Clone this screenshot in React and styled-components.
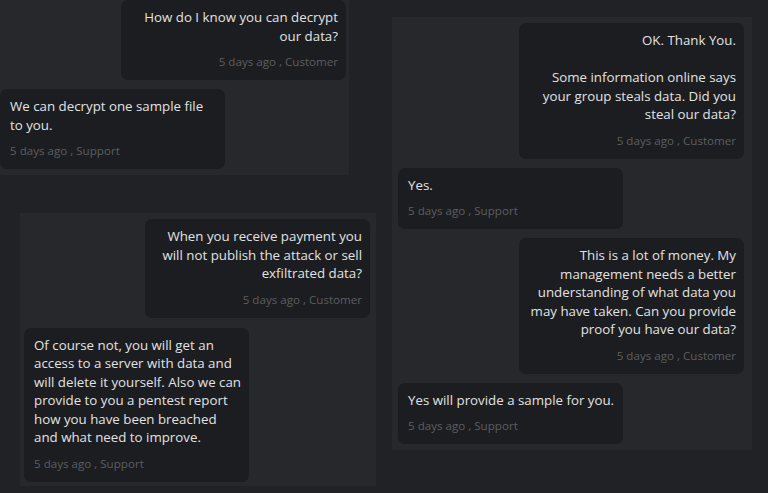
import styled, {createGlobalStyle} from 'styled-components';

const GlobalStyle = createGlobalStyle`
    html, body {
        margin: 0;
        padding: 0;
        background: #202225;
        overflow: hidden;
    }
    body {
        font-family: "Open Sans", "Noto Sans", sans-serif;
        width: 768px;
        height: 493px;
    }
`;

const chats = {
    first: [
        {from: 'Customer', text: 'How do I know you can decrypt\nour data?'},
        {from: 'Support', text: 'We can decrypt one sample file\nto you.'},
    ],
    second: [
        {from: 'Customer', text: 'When you receive payment you\nwill not publish the attack or sell\nexfiltrated data?'},
        {from: 'Support', text: 'Of course not, you will get an\naccess to a server with data and\nwill delete it yourself. Also we can\nprovide to you a pentest report\nhow you have been breached\nand what need to improve.'},
    ],
    third: [
        {from: 'Customer', text: 'OK. Thank You.\n\nSome information online says\nyour group steals data. Did you\nsteal our data?'},
        {from: 'Support', text: 'Yes.'},
        {from: 'Customer', text: 'This is a lot of money. My\nmanagement needs a better\nunderstanding of what data you\nmay have taken. Can you provide\nproof you have our data?'},
        {from: 'Support', text: 'Yes will provide a sample for you.'},
    ],
};

function Message({from, text}) {
    const mine = from === 'Customer';
    return (
        <Bubble $mine={mine}>
            <Text>{text}</Text>
            <Meta>5 days ago , {from}</Meta>
        </Bubble>
    );
}

function Chat({items, ...rest}) {
    return (
        <Panel {...rest}>
            {items.map((m, i) => <Message key={i} {...m}/>)}
        </Panel>
    );
}

function App() {
    return (
        <Page>
            <GlobalStyle/>
            <LeftColumn>
                <TopChat items={chats.first}/>
                <BottomChat items={chats.second}/>
            </LeftColumn>
            <RightChat items={chats.third}/>
        </Page>
    );
}

const Page = styled.div`
    display: flex;
    align-items: flex-start;
    width: 768px;
    height: 493px;
    overflow: hidden;
`;

const LeftColumn = styled.div`
    display: flex;
    flex-direction: column;
    width: 376px;
    flex-shrink: 0;
`;

const Panel = styled.div`
    display: flex;
    flex-direction: column;
    gap: 9px;
    background: #26282b;
    box-sizing: border-box;
    padding: 6px;
`;

const TopChat = styled(Chat)`
    width: 349px;
    margin-top: -6px;
    padding: 6px 3px 6px 0;
`;

const BottomChat = styled(Chat)`
    width: 356px;
    margin-top: 38px;
    margin-left: 20px;
    padding: 6px 6px 4px 4px;
    gap: 10px;
`;

const RightChat = styled(Chat)`
    width: 360px;
    margin-top: 17px;
    margin-left: 16px;
    padding: 6px 8px 6px 6px;
`;

const Bubble = styled.div`
    width: 225px;
    box-sizing: border-box;
    padding: 8px 10px 11px 10px;
    border-radius: 7px;
    background: #1c1d20;
    align-self: ${p => (p.$mine ? 'flex-end' : 'flex-start')};
    text-align: ${p => (p.$mine ? 'right' : 'left')};
    padding-right: ${p => (p.$mine ? '8px' : '10px')};
`;

const Text = styled.div`
    white-space: pre;
    color: #e1e2e3;
    font-size: 13.3px;
    line-height: 18.5px;
`;

const Meta = styled.div`
    margin-top: 10px;
    color: #5b5e62;
    font-size: 11.6px;
    line-height: 14px;
`;

export default App;
